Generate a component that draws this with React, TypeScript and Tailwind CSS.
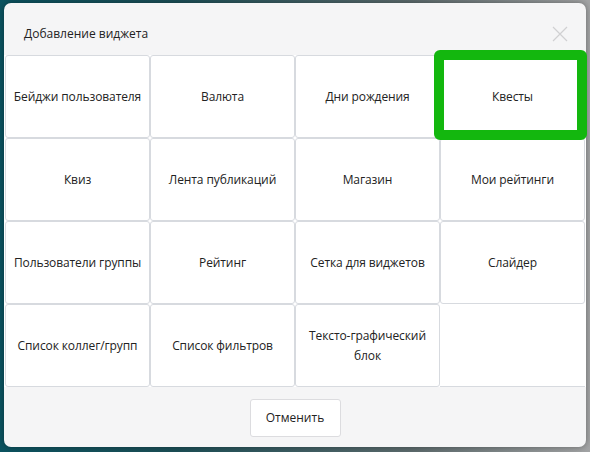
import React from "react";

const widgets = [
  "Бейджи пользователя",
  "Валюта",
  "Дни рождения",
  "Квесты",
  "Квиз",
  "Лента публикаций",
  "Магазин",
  "Мои рейтинги",
  "Пользователи группы",
  "Рейтинг",
  "Сетка для виджетов",
  "Слайдер",
  "Список коллег/групп",
  "Список фильтров",
  "Тексто-графический блок",
];

export default function App() {
  return (
    <div
      className="relative h-[452px] w-[590px] overflow-hidden bg-[linear-gradient(90deg,#0b5360_0%,#1c4f57_30%,#5d6b6d_70%,#a3a4a5_100%)] pt-[3px] pl-[4px]"
      style={{ fontFamily: '"Open Sans", "Noto Sans", sans-serif' }}
    >
      <div className="relative flex h-[444px] w-[582px] flex-col overflow-visible rounded-[7px] bg-[#f5f5f6] shadow-[0_0_6px_rgba(0,0,0,0.35)]">
        {/* Header */}
        <div className="flex h-[52px] items-center justify-between pt-[10px] pl-[20px] pr-[18px]">
          <span className="text-[12px] text-[#222]">Добавление виджета</span>
          <svg width="16" height="16" viewBox="0 0 16 16">
            <path d="M1 1 L15 15 M15 1 L1 15" stroke="#d0d0d2" strokeWidth="1.2" fill="none" />
          </svg>
        </div>

        {/* Widget grid */}
        <div className="grid grid-cols-4 grid-rows-[repeat(4,83px)] bg-white px-[1px]">
          {widgets.map((w) => (
            <div
              key={w}
              className="flex items-center justify-center whitespace-normal rounded-[3px] border border-[#d7dadf] px-[3px] text-center text-[12px] leading-[20px] tracking-[-0.1px] text-[#222]"
            >
              {w === "Тексто-графический блок" ? (
                <span className="px-[10px]">{w}</span>
              ) : (
                <span className="whitespace-nowrap">{w}</span>
              )}
            </div>
          ))}
          <div className="border-b border-[#d7dadf]" />
        </div>

        {/* Footer */}
        <div className="flex flex-1 items-start justify-center pt-[12px]">
          <button className="h-[38px] w-[91px] rounded-[3px] border border-[#dcdcdf] bg-white text-[12px] text-[#222]">
            Отменить
          </button>
        </div>

        {/* Highlight annotation */}
        <div className="pointer-events-none absolute left-[430px] top-[47px] h-[90px] w-[153px] rounded-[6px] border-[10px] border-[#13b70e]" />
      </div>
    </div>
  );
}
